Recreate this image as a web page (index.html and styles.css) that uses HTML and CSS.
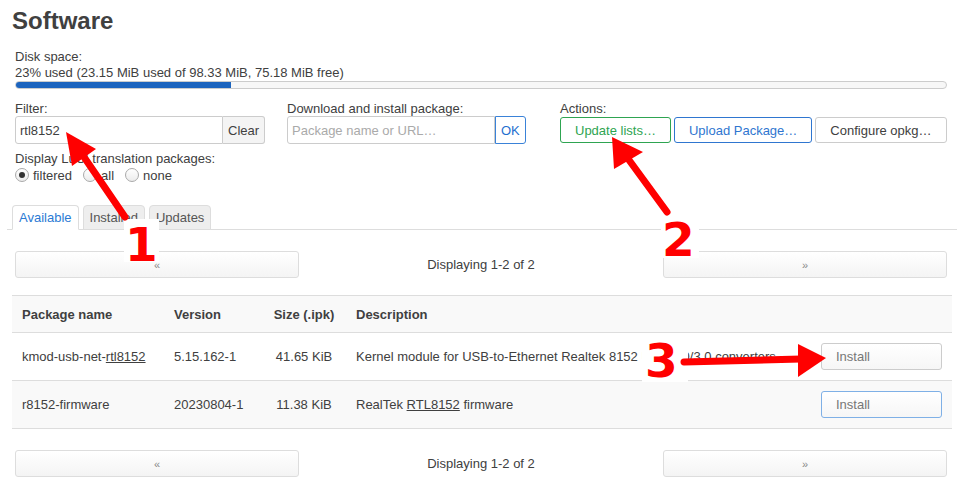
FILE: index.html
```html
<!DOCTYPE html>
<html lang="en">
<head>
    <meta charset="UTF-8">
    <title>Software - LuCI</title>
    <link rel="stylesheet" href="styles.css">
</head>
<body>
    <div class="main">
        <h2>Software</h2>

        <div class="controls">
            <div class="disk">
                <div class="label">Disk space:</div>
                <div class="label">23% used (23.15 MiB used of 98.33 MiB, 75.18 MiB free)</div>
                <div class="progress"><div class="bar" style="width: 23.1%"></div></div>
            </div>

            <div class="row">
                <div class="field">
                    <div class="label">Filter:</div>
                    <div class="group">
                        <input class="text" type="text" value="rtl8152">
                        <button class="addon">Clear</button>
                    </div>
                    <div class="label lang">Display LuCI translation packages:</div>
                    <div class="radios">
                        <span class="opt"><span class="radio checked"></span>filtered</span>
                        <span class="opt"><span class="radio"></span>all</span>
                        <span class="opt"><span class="radio"></span>none</span>
                    </div>
                </div>
                <div class="field">
                    <div class="label">Download and install package:</div>
                    <div class="group">
                        <input class="text" type="text" placeholder="Package name or URL…">
                        <button class="addon addon-primary">OK</button>
                    </div>
                </div>
                <div class="field">
                    <div class="label">Actions:</div>
                    <div class="actions">
                        <button class="btn btn-positive">Update lists…</button>
                        <button class="btn btn-action">Upload Package…</button>
                        <button class="btn">Configure opkg…</button>
                    </div>
                </div>
            </div>
        </div>

        <ul class="tabs">
            <li class="active">Available</li>
            <li>Installed</li>
            <li>Updates</li>
        </ul>

        <div class="pager">
            <button class="pg">«</button>
            <div class="pg-info">Displaying 1-2 of 2</div>
            <button class="pg">»</button>
        </div>

        <table class="pkgs">
            <colgroup>
                <col style="width: 152px">
                <col style="width: 98px">
                <col style="width: 84px">
                <col>
                <col style="width: 141px">
            </colgroup>
            <tr class="titles">
                <th>Package name</th>
                <th>Version</th>
                <th class="size">Size (.ipk)</th>
                <th>Description</th>
                <th></th>
            </tr>
            <tr>
                <td>kmod-usb-net-<u>rtl8152</u></td>
                <td>5.15.162-1</td>
                <td class="size">41.65 KiB</td>
                <td class="desc">Kernel module for USB-to-Ethernet Realtek 8152 USB 2.0/3.0 converters</td>
                <td><button class="install">Install</button></td>
            </tr>
            <tr class="alt">
                <td>r8152-firmware</td>
                <td>20230804-1</td>
                <td class="size">11.38 KiB</td>
                <td class="desc">RealTek <u>RTL8152</u> firmware</td>
                <td><button class="install focus">Install</button></td>
            </tr>
        </table>

        <div class="pager pager-bottom">
            <button class="pg">«</button>
            <div class="pg-info">Displaying 1-2 of 2</div>
            <button class="pg">»</button>
        </div>
    </div>

    <!-- red annotation marks drawn over the page -->
    <svg class="marks" width="967" height="494" viewBox="0 0 967 494">
        <rect x="124" y="219" width="35" height="43" fill="#fff"/>
        <rect x="661" y="216" width="38" height="42" fill="#fff"/>
        <rect x="642" y="338" width="46" height="44" fill="#fff"/>
        <g stroke="#f00" stroke-width="7" stroke-linecap="round">
            <line x1="125" y1="217" x2="84" y2="157"/>
            <line x1="667" y1="212" x2="629" y2="160"/>
            <line x1="684" y1="362" x2="801" y2="359"/>
        </g>
        <g fill="#f00">
            <polygon points="66,132 96,149 72,166"/>
            <polygon points="612,137 643,152 614,169"/>
            <polygon points="826,358 798,344 798,377"/>
        </g>
        <g class="num">
            <text x="125" y="261">1</text>
            <text x="662" y="256">2</text>
            <text x="645" y="377">3</text>
        </g>
    </svg>
</body>
</html>
```

FILE: styles.css
```css
* {
    box-sizing: border-box;
}

body {
    margin: 0;
    width: 967px;
    height: 494px;
    overflow: hidden;
    position: relative;
    background: #fff;
    color: #404040;
    font-family: "Liberation Sans", Arial, sans-serif;
    font-size: 13px;
}

.main {
    padding: 0 15px 0 12px;
}

h2 {
    margin: 0;
    padding-top: 6px;
    font-size: 24px;
    line-height: 30px;
    font-weight: bold;
    color: #404040;
}

.controls {
    padding: 0 5px 0 3px;
}

.disk {
    margin-top: 13px;
}

.label {
    line-height: 16px;
}

.progress {
    height: 8px;
    border: 1px solid #ccc;
    border-radius: 4px;
    background: #f7f7f7;
    overflow: hidden;
}

.progress .bar {
    height: 100%;
    background: #1c64be;
}

.row {
    display: grid;
    grid-template-columns: 272px 273px 1fr;
    margin-top: 12px;
}

.field .label {
    line-height: 15px;
}

.group {
    display: flex;
    height: 28px;
}

input.text {
    width: 208px;
    height: 28px;
    margin: 0;
    padding: 0 4px;
    border: 1px solid #ccc;
    border-radius: 3px 0 0 3px;
    font-family: inherit;
    font-size: 13px;
    color: #404040;
    outline: none;
}

input.text::placeholder {
    color: #aaa;
}

.addon {
    height: 28px;
    margin: 0;
    padding: 0 5px;
    border: 1px solid #ccc;
    border-left: none;
    border-radius: 0 3px 3px 0;
    background: #f4f4f4;
    font-family: inherit;
    font-size: 13px;
    color: #404040;
}

.addon-primary {
    border: 1px solid #3a82d8;
    background: #fff;
    color: #1f6fcf;
}

.field .lang {
    margin-top: 7px;
}

.radios {
    display: flex;
    align-items: center;
    height: 18px;
}

.opt {
    display: flex;
    align-items: center;
    margin-right: 11px;
}

.radio {
    width: 14px;
    height: 14px;
    margin-right: 4px;
    border: 1px solid #aaa;
    border-radius: 50%;
    background: linear-gradient(#fff, #ececec);
    position: relative;
}

.radio.checked::after {
    content: "";
    position: absolute;
    left: 3px;
    top: 3px;
    width: 6px;
    height: 6px;
    border-radius: 50%;
    background: #333;
}

.actions {
    display: flex;
    gap: 3px;
    padding-top: 1px;
}

.btn {
    height: 26px;
    margin: 0;
    padding: 0 14px;
    border: 1px solid #ccc;
    border-radius: 3px;
    background: #fff;
    font-family: inherit;
    font-size: 13px;
    color: #404040;
    white-space: nowrap;
}

.btn-positive {
    border-color: #2ea451;
    color: #2ea451;
}

.btn-action {
    border-color: #2f76d0;
    color: #2f76d0;
}

.tabs {
    display: flex;
    list-style: none;
    margin: 21px -5px 0;
    padding: 0 0 0 5px;
    border-bottom: 1px solid #ddd;
}

.tabs li {
    margin-right: 4px;
    margin-bottom: -1px;
    padding: 0 6px;
    line-height: 23px;
    border: 1px solid #ddd;
    border-radius: 4px 4px 0 0;
    background: #eee;
    color: #555;
}

.tabs li.active {
    background: #fff;
    border-bottom-color: #fff;
    color: #2b7ad4;
}

.pager {
    display: grid;
    grid-template-columns: 284px 1fr 284px;
    align-items: center;
    margin-top: 21px;
    padding: 0 5px 0 3px;
}

.pager-bottom {
    margin-top: 21px;
}

.pg {
    height: 27px;
    margin: 0;
    border: 1px solid #ddd;
    border-radius: 3px;
    background: linear-gradient(#fff, #f4f4f4);
    font-family: inherit;
    font-size: 11px;
    color: #888;
}

.pg-info {
    text-align: center;
}

.pkgs {
    width: 100%;
    margin-top: 17px;
    table-layout: fixed;
    border-collapse: separate;
    border-spacing: 0;
}

.pkgs th,
.pkgs td {
    padding: 10px;
    border-top: 1px solid #ddd;
    text-align: left;
    vertical-align: middle;
    white-space: nowrap;
    overflow: hidden;
}

.pkgs th {
    padding: 10px 10px 8px;
    line-height: 18px;
    font-weight: bold;
}

.pkgs .titles,
.pkgs .alt {
    background: #f9f9f9;
}

.pkgs tr:last-child td {
    border-bottom: 1px solid #ddd;
}

.pkgs .size {
    text-align: center;
}

.install {
    display: block;
    width: 121px;
    height: 27px;
    margin: 0;
    padding: 0 0 0 14px;
    border: 1px solid #ccc;
    border-radius: 3px;
    background: linear-gradient(#fff, #f6f6f6);
    text-align: left;
    font-family: inherit;
    font-size: 13px;
    color: #777;
}

.install.focus {
    border-color: #7fb0e6;
}

.marks {
    position: absolute;
    left: 0;
    top: 0;
    pointer-events: none;
}

.num text {
    font-family: "DejaVu Sans", sans-serif;
    font-weight: bold;
    font-size: 47px;
    fill: #f00;
}
```
